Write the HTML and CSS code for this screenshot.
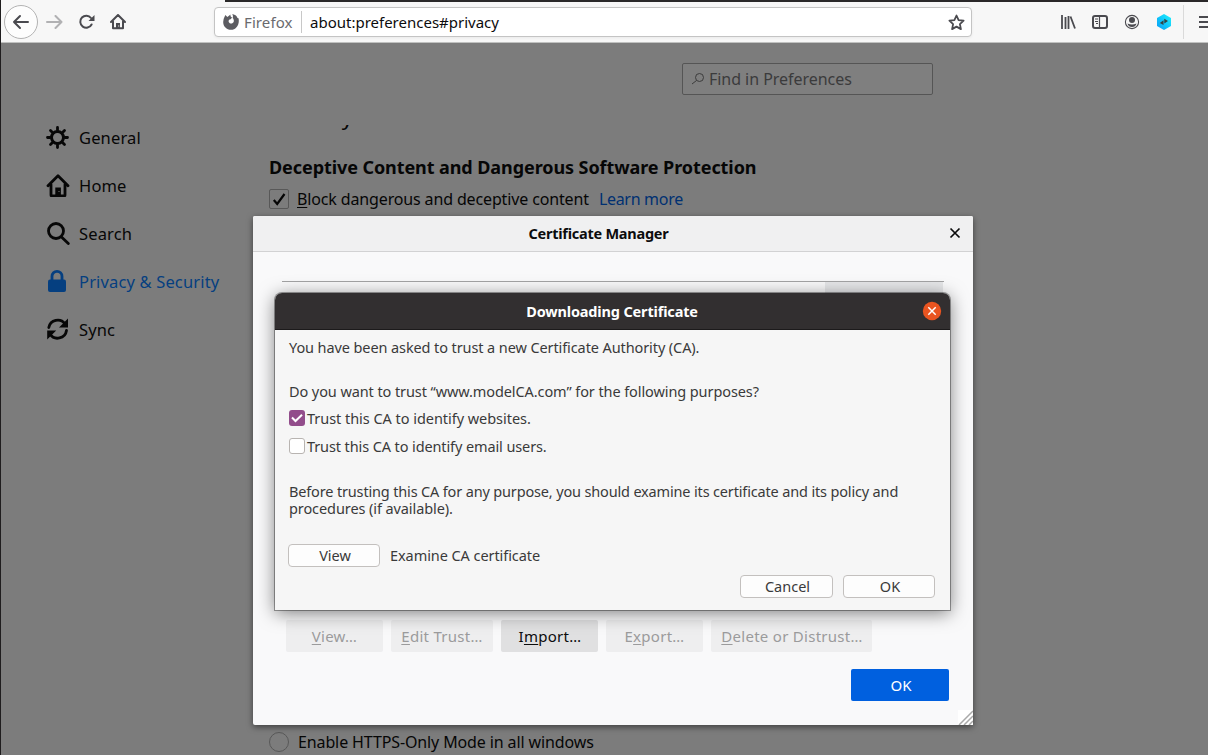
FILE: index.html
```html
<!DOCTYPE html>
<html lang="en">
<head>
<meta charset="utf-8">
<title>Preferences</title>
<link rel="stylesheet" href="styles.css">
</head>
<body>
<div class="browser">
  <header class="toolbar">
    <div class="nav">
      <span class="back"><svg width="18" height="16" viewBox="0 0 18 16"><path d="M16 8H2M8 2L2 8l6 6" class="ln"/></svg></span>
      <svg class="forward" width="18" height="16" viewBox="0 0 18 16"><path d="M1 8h14.500M9.500 2l6 6-6 6" class="ln"/></svg>
      <svg class="reload" width="16" height="16" viewBox="0 0 16 16"><path d="M12.600 10.500A6 6 0 1 1 12 4" class="ln"/><path d="M15.500 1v6h-6z" fill="#4a4a4f"/></svg>
      <svg class="home" width="16" height="16" viewBox="0 0 16 16"><path d="M1 8l7-7 7 7M3 7.500V14.200h10V7.500" class="ln"/><path d="M6 15V9h4v6z" fill="#4a4a4f"/><path d="M8.200 11.500h1v1h-1z" fill="#fff"/></svg>
    </div>
    <div class="urlbar">
      <svg class="fox" width="16" height="16" viewBox="0 0 16 16"><path d="M2.300 1L4.400 3C5.500 2.200 6.400 1.600 7.500.6C7.200 2.300 8 2.900 9.200 3.600L7.600 5.200C5.800 5.300 5.200 6.900 5.900 8.300C6.900 10.100 10 9.900 10.700 7.700C11.100 6.200 10.600 4.700 9.700 3.900C10.100 2.500 10 1.300 9.300 0C12.500.6 14 2.300 14.500 4L15.500 4.300C17 10.500 13 15.800 8 15.800C3 15.800-.7 11.500.4 6.500C.6 4.500 1.500 3 2.300 1Z" fill="#5c5c61"/></svg>
      <span class="identity">Firefox</span>
      <span class="url">about:preferences#privacy</span>
      <svg class="star" width="17" height="17" viewBox="0 0 17 17"><path d="M8.500 1.500l2.100 4.600 5 .6-3.700 3.400 1 5-4.400-2.500L4.100 15.100l1-5L1.400 6.700l5-.6z" class="ln"/></svg>
    </div>
    <div class="tools">
      <svg width="16" height="16" viewBox="0 0 16 16"><path d="M2 1v14M5.500 3v12M8.500 2v13M10.500 2.500L15 14.500" fill="none" stroke="#4a4a4f" stroke-width="1.800"/></svg>
      <svg width="16" height="16" viewBox="0 0 16 16"><rect x="1" y="2" width="14" height="12" rx="2" class="ln"/><path d="M7.500 2v12" stroke="#4a4a4f" stroke-width="1.200"/><path d="M3 5h3M3 7.500h3M4 9.500h2" stroke="#4a4a4f"/></svg>
      <svg width="16" height="16" viewBox="0 0 16 16"><circle cx="8" cy="8" r="6.600" fill="none" stroke="#4a4a4f" stroke-width="1.100"/><circle cx="8" cy="6" r="3" fill="#4a4a4f"/><path d="M3.500 9.500Q8 11.500 12.500 9.500Q11.500 13 8 13T3.500 9.500Z" fill="#4a4a4f"/></svg>
      <svg width="16" height="16" viewBox="0 0 16 16"><defs><linearGradient id="hex" x1="0" y1="1" x2="1" y2="0"><stop offset="0" stop-color="#0a9bf5"/><stop offset=".5" stop-color="#0fc8fb"/><stop offset="1" stop-color="#22f4fb"/></linearGradient></defs><path d="M8 0l7 4v8l-7 4-7-4V4z" fill="url(#hex)"/><path d="M3.800 9L7.500 6.200V11zM8.300 4.800L12 7 8.300 9.600z" fill="#344"/></svg>
    </div>
    <div class="menu"><svg width="9" height="16" viewBox="0 0 9 16"><path d="M0 3h10M0 8h10M0 13h10" fill="none" stroke="#4a4a4f" stroke-width="2"/></svg></div>
  </header>

  <div class="prefs">
    <nav class="categories">
      <div class="cat"><svg width="24" height="24" viewBox="0 0 24 24"><circle cx="11.500" cy="12.500" r="6" fill="none" stroke="#070707" stroke-width="3"/><path d="M11.500 5V2.500M11.500 20v2.500M4 12.500H1.500M19 12.500h2.500M6.500 7.500l-2-2M16.500 7.500l2-2M6.500 17.500l-2 2M16.500 17.500l2 2" class="k"/></svg>General</div>
      <div class="cat"><svg width="24" height="24" viewBox="0 0 24 24"><path d="M2 12.800L12 2.700 22 12.800M5 11.500v10.500q0 1 1 1h12q1 0 1-1V11.500" class="k"/><path d="M9.300 23v-8.500h5.600v8.500z" fill="#070707"/><path d="M12.500 18h1v1h-1z" fill="#7c7c7c"/></svg>Home</div>
      <div class="cat"><svg width="24" height="24" viewBox="0 0 24 24"><circle cx="10" cy="10" r="7.500" class="k"/><path d="M15.500 16L22.300 22.500" class="k"/></svg>Search</div>
      <div class="cat selected"><svg width="24" height="24" viewBox="0 0 24 24"><path d="M6 11V7.300a5 5 0 0 1 10 0v4" fill="none" stroke="#053f80" stroke-width="2.800"/><rect x="2" y="10.500" width="18" height="12.500" rx="2" fill="#053f80"/></svg>Privacy &amp; Security</div>
      <div class="cat"><svg width="24" height="24" viewBox="0 0 24 24"><path d="M2.800 10.500A9 9 0 0 1 19 7M20.500 13.500A9 9 0 0 1 4 17" class="k"/><path d="M22 1.500v9h-9zM1.200 22.500v-9h9z" fill="#070707"/></svg>Sync</div>
    </nav>
    <main class="main">
      <div class="find"><svg width="14" height="14" viewBox="0 0 14 14"><circle cx="8.500" cy="5.500" r="4" class="thin"/><path d="M5.500 8.500L1 12" class="thin"/></svg>Find in Preferences</div>
      <div class="pane">
        <h1 class="title">Security</h1>
        <h2 class="subtitle">Deceptive Content and Dangerous Software Protection</h2>
        <div class="option block"><span class="check"><svg width="18" height="18" viewBox="0 0 18 18"><path d="M3.800 10l3.400 4L14.500 4" fill="none" stroke="#050505" stroke-width="2.200"/></svg></span><span><u>B</u>lock dangerous and deceptive content</span><a class="learn">Learn more</a></div>
        <div class="option https"><span class="radio"></span>Enable HTTPS-Only Mode in all windows</div>
      </div>
    </main>
  </div>
</div>

<section class="manager">
  <header class="manager-head">Certificate Manager
    <svg class="close" width="12" height="12" viewBox="0 0 12 12"><path d="M1.500 1.500l9 9M10.500 1.500l-9 9" fill="none" stroke="#0c0c0d" stroke-width="1.700"/></svg>
  </header>
  <div class="tree"><div class="tree-picker"></div></div>
  <div class="actions">
    <span class="btn w97"><span><u>V</u>iew…</span></span>
    <span class="btn w102"><span><u>E</u>dit Trust…</span></span>
    <span class="btn w97 enabled"><span>I<u>m</u>port…</span></span>
    <span class="btn w97"><span>E<u>x</u>port…</span></span>
    <span class="btn w161"><span><u>D</u>elete or Distrust…</span></span>
  </div>
  <div class="accept"><span class="primary">OK</span></div>
  <svg class="resizer" width="15" height="15" viewBox="0 0 15 15"><path d="M0 0h15v15H0z" fill="#fff"/><path d="M1 15L15 1M6 15l9-9M11 15l4-4" stroke="#a9a9a9" stroke-width="1.500"/></svg>
</section>

<section class="download">
  <header class="download-head">Downloading Certificate
    <svg class="close-round" width="20" height="20" viewBox="0 0 20 20"><circle cx="10" cy="10" r="9.200" fill="#e95420"/><path d="M6.300 6.300l7.400 7.400M13.700 6.300l-7.400 7.400" stroke="#fff" stroke-width="1.500"/></svg>
  </header>
  <div class="download-body">
    <p class="ask">You have been asked to trust a new Certificate Authority (CA).</p>
    <p class="question">Do you want to trust “www.modelCA.com” for the following purposes?</p>
    <div class="trust"><span class="box on"><svg width="16" height="16" viewBox="0 0 16 16"><path d="M3 7.500l3.500 3.500L13 4.800" fill="none" stroke="#fff" stroke-width="2"/></svg></span>Trust this CA to identify websites.</div>
    <div class="trust email"><span class="box"></span>Trust this CA to identify email users.</div>
    <p class="before">Before trusting this CA for any purpose, you should examine its certificate and its policy and<br><span class="last">procedures (if available).</span></p>
    <div class="examine"><span class="native">View</span><span class="hint">Examine CA certificate</span></div>
    <div class="confirm"><span class="native wide">Cancel</span><span class="native">OK</span></div>
  </div>
</section>
</body>
</html>
```
FILE: styles.css
```css
* { box-sizing: border-box; margin: 0; padding: 0; }
body { width: 1208px; height: 755px; overflow: hidden; position: relative; font-family: "Noto Sans", "Open Sans", sans-serif; white-space: nowrap; }
svg { display: block; flex: none; }
.ln { fill: none; stroke: #4a4a4f; stroke-width: 2; stroke-linejoin: round; stroke-linecap: round; }
.k { fill: none; stroke: #070707; stroke-width: 2.8; stroke-linecap: round; stroke-linejoin: round; }
.thin { fill: none; stroke: #3c3c3c; stroke-width: 1; }
.star .ln { stroke-width: 1.8; }
u { text-decoration-thickness: 1px; text-underline-offset: 2px; text-decoration-skip-ink: none; }

.browser { height: 755px; display: flex; flex-direction: column; border-left: 1px solid #1f1d1e; background: #7c7c7c; }
.toolbar { flex: none; height: 43px; display: flex; align-items: center; background: #f7f7f7; border-bottom: 1px solid #c0c1c0; position: relative; }
.toolbar::before { content: ""; position: absolute; left: 224px; right: 0; top: 0; height: 2px; background: #2a2829; }
.nav { width: 213px; padding: 2px 0 0 3px; display: flex; align-items: center; }
.back { width: 34px; height: 34px; border: 1px solid #b3b3b3; border-radius: 50%; background: #fdfdfd; display: flex; align-items: center; justify-content: center; }
.forward { margin-left: 8px; opacity: .4; }
.reload { margin-left: 15px; }
.home { margin-left: 15px; }
.urlbar { margin-top: 2px; width: 758px; height: 30px; border: 1px solid #c4c4c4; border-radius: 4px; background: #fff; box-shadow: 0 1px 3px rgba(0,0,0,.06); display: flex; align-items: center; padding: 0 6px 0 8px; font-size: 15px; }
.identity { width: 63px; padding-left: 5px; height: 22px; line-height: 22px; border-right: 1px solid #c8c8c8; color: #6a6a6e; letter-spacing: .1px; }
.url { padding-left: 8px; color: #0c0c0d; flex: 1; line-height: 22px; }
.tools { margin: 2px 0 0 88px; display: flex; gap: 16px; }
.menu { margin: 2px 0 0 11px; border-left: 1px solid #dadada; height: 34px; padding-left: 15px; display: flex; align-items: center; }

.prefs { flex: 1; min-height: 0; display: flex; }
.categories { width: 268px; padding: 70px 0 0 45px; }
.cat { height: 48px; display: flex; align-items: center; gap: 9px; font-size: 16.5px; letter-spacing: .15px; color: #070707; }
.cat.selected { color: #053f80; }
.main { width: 664px; display: flex; flex-direction: column; }
.find { align-self: flex-end; flex: none; width: 251px; height: 32px; margin-top: 20px; border: 1px solid #555; border-radius: 2px; background: #7f7f7f; display: flex; align-items: center; gap: 4px; padding-left: 8px; font-size: 16px; letter-spacing: -.04px; color: #3b3b3c; }
.pane { margin-top: 30px; flex: 1; min-height: 0; overflow: hidden; display: flex; flex-direction: column; color: #060606; font-size: 16px; }
.title { flex: none; margin-top: -24px; font-size: 22px; line-height: 30px; font-weight: 400; letter-spacing: .2px; }
.subtitle { flex: none; margin-top: 24px; font-size: 18px; line-height: 24px; font-weight: 700; letter-spacing: -.08px; }
.option { flex: none; height: 20px; display: flex; align-items: center; gap: 8px; letter-spacing: -.14px; }
.block { margin-top: 10px; }
.check, .radio { width: 20px; height: 20px; border: 1px solid #585858; border-radius: 2px; }
.radio { border-radius: 50%; margin-right: 1px; }
.learn { margin-left: 2px; color: #003072; letter-spacing: -.3px; }
.https { margin-top: 523px; letter-spacing: -.12px; }

.manager { position: absolute; left: 253px; top: 216px; width: 720px; height: 509px; border-radius: 2px; background: #f9f9fa; box-shadow: 0 2px 6px rgba(0,0,0,.5); display: flex; flex-direction: column; }
.manager-head { flex: none; height: 36px; line-height: 35px; background: #f0f0f1; border-bottom: 1px solid #d2d2d3; border-radius: 2px 2px 0 0; position: relative; padding-right: 29px; text-align: center; font-size: 14.5px; font-weight: 700; letter-spacing: -.25px; color: #0c0c0d; }
.close { position: absolute; right: 12px; top: 11px; }
.tree { flex: none; margin: 29px 29px 0; height: 339px; border-top: 1px solid #a3a3a4; }
.tree-picker { margin-left: auto; margin-right: 1px; width: 118px; height: 40px; background: #e6e7e9; }
.actions { padding-left: 33px; display: flex; gap: 8px; font-size: 15px; letter-spacing: .28px; }
.btn { height: 32px; border-radius: 2px; background: #eeeeef; color: #9b9b9c; display: flex; align-items: center; justify-content: center; padding: 0 0 1px; }
.enabled { background: #e0e0e1; color: #0c0c0d; padding-left: 1px; }
.w97 { width: 97px; }
.w102 { width: 102px; }
.w161 { width: 161px; padding-left: 1px; }
.accept { display: flex; justify-content: flex-end; padding: 17px 24px 0 0; }
.primary { width: 98px; height: 32px; line-height: 33px; border-radius: 2px; background: #0060df; color: #fff; font-size: 15px; text-align: center; padding-left: 2px; }
.resizer { position: absolute; right: 0; bottom: 0; }

.download { position: absolute; left: 275px; top: 293px; width: 675px; height: 317px; border-radius: 7px 7px 0 0; background: #f6f6f6; box-shadow: 0 0 0 1px rgba(0,0,0,.35), 0 3px 18px rgba(0,0,0,.5); font-size: 14.5px; color: #3a3a3a; }
.download-head { height: 37px; line-height: 37px; border-radius: 7px 7px 0 0; background: #322f30; border-bottom: 1px solid #1c1a1b; color: #fff; text-align: center; font-weight: 700; letter-spacing: -.16px; padding-right: 1px; position: relative; }
.close-round { position: absolute; right: 8px; top: 8px; }
.download-body { padding: 9px 14px 0; display: flex; flex-direction: column; }
.ask { line-height: 17px; letter-spacing: -.1px; }
.question { margin-top: 27px; line-height: 17px; letter-spacing: -.09px; }
.trust { margin-top: 10px; height: 16px; display: flex; align-items: center; gap: 2px; letter-spacing: -.04px; }
.email { margin-top: 12px; letter-spacing: -.11px; }
.box { width: 16px; height: 16px; border: 1px solid #b8b4b1; border-radius: 3px; background: #fff; }
.box.on { border: 0; background: #924d8b; }
.before { margin-top: 29px; line-height: 17px; letter-spacing: -.16px; }
.last { letter-spacing: -.09px; }
.examine { margin: 27px 0 0 -1px; height: 23px; display: flex; align-items: center; gap: 10px; }
.hint { line-height: 21px; letter-spacing: -.07px; }
.native { width: 92px; height: 23px; line-height: 20px; border: 1px solid #c3c0be; border-radius: 4px; background: #fdfdfd; text-align: center; padding-left: 2px; }
.wide { width: 93px; }
.confirm { margin: 8px 1px 0 0; display: flex; justify-content: flex-end; gap: 10px; }
```
